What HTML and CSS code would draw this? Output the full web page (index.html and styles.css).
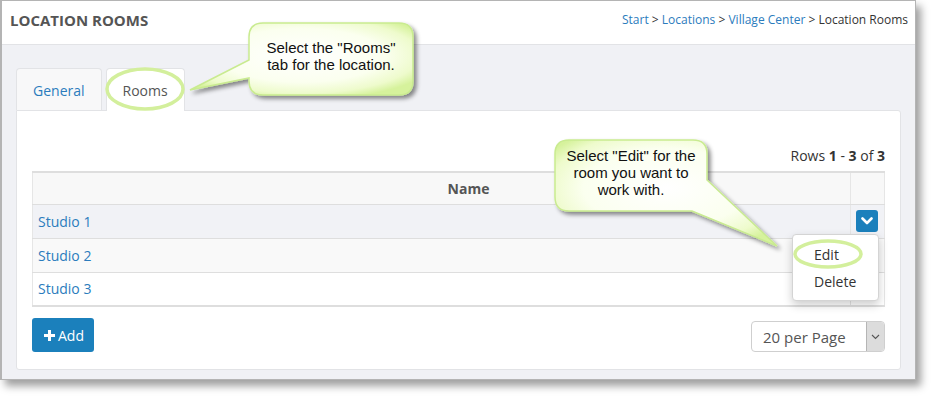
FILE: index.html
```html
<!DOCTYPE html>
<html>
<head>
<meta charset="utf-8">
<link rel="stylesheet" href="styles.css">
</head>
<body>
<div class="window">
  <div class="header">
    <h1 class="title">LOCATION ROOMS</h1>
    <div class="crumbs"><a>Start</a> &gt; <a>Locations</a> &gt; <a>Village Center</a> &gt; <span class="cur">Location Rooms</span></div>
  </div>
  <div class="content">
    <div class="tabs">
      <div class="tab">General</div>
      <div class="tab active">Rooms</div>
    </div>
    <div class="panel">
      <div class="rows-info">Rows <b>1</b> - <b>3</b> of <b>3</b></div>
      <table class="grid">
        <thead>
          <tr><th class="name">Name</th><th class="act"></th></tr>
        </thead>
        <tbody>
          <tr class="hover"><td><a>Studio 1</a></td><td class="act">
            <span class="toggle"><svg width="12" height="8" viewBox="0 0 12 8"><polyline points="1.5,1.5 6,6 10.5,1.5" fill="none" stroke="#fff" stroke-width="2.6" stroke-linecap="round" stroke-linejoin="round"/></svg></span>
            <div class="menu">
              <div class="item">Edit</div>
              <div class="item">Delete</div>
            </div>
          </td></tr>
          <tr class="odd"><td><a>Studio 2</a></td><td class="act"></td></tr>
          <tr><td><a>Studio 3</a></td><td class="act"></td></tr>
        </tbody>
      </table>
      <div class="footer">
        <button class="add"><svg width="11" height="11" viewBox="0 0 11 11"><path d="M4 0h3v4h4v3H7v4H4V7H0V4h4z" fill="#fff"/></svg>Add</button>
        <div class="select"><span class="sel-text">20 per Page</span><span class="sel-arrow"><svg width="9" height="6" viewBox="0 0 9 6"><polyline points="1,1 4.5,4.5 8,1" fill="none" stroke="#555" stroke-width="1.1"/></svg></span></div>
      </div>
    </div>
  </div>
</div>

<svg class="overlay" width="940" height="406" viewBox="0 0 940 406">
  <defs>
    <radialGradient id="g1" cx="50%" cy="45%" r="62%">
      <stop offset="0" stop-color="#ffffff"/>
      <stop offset="0.6" stop-color="#fbffef"/>
      <stop offset="0.85" stop-color="#eefbcc"/>
      <stop offset="1" stop-color="#d6f29c"/>
    </radialGradient>
    <filter id="sh" x="-20%" y="-20%" width="140%" height="150%">
      <feDropShadow dx="3" dy="3" stdDeviation="2" flood-color="#000" flood-opacity="0.45"/>
    </filter>
  </defs>
  <ellipse cx="145" cy="89" rx="38" ry="20" fill="none" stroke="#d3ef9c" stroke-width="3.5"/>
  <ellipse cx="828" cy="254" rx="33" ry="13" fill="none" stroke="#d3ef9c" stroke-width="3.5"/>
  <path filter="url(#sh)" fill="url(#g1)" stroke="#c9eb90" stroke-width="1.5"
    d="M263 23 H399 Q413 23 413 37 V81 Q413 95 399 95 H263 Q249 95 249 81 V78 L190 90 L249 60 V37 Q249 23 263 23 Z"/>
  <path filter="url(#sh)" fill="url(#g1)" stroke="#c9eb90" stroke-width="1.5"
    d="M569 140 H693 Q707 140 707 154 V180 L777 246 L692 211 H569 Q555 211 555 197 V154 Q555 140 569 140 Z"/>
</svg>
<div class="note note1">Select the "Rooms"<br>tab for the location.</div>
<div class="note note2">Select "Edit" for the<br>room you want to<br>work with.</div>
</body>
</html>
```

FILE: styles.css
```css
* { box-sizing: border-box; }
html, body { margin: 0; padding: 0; }
body {
  width: 940px;
  height: 406px;
  background: #ffffff;
  font-family: "Open Sans", "Liberation Sans", sans-serif;
  color: #333;
  position: relative;
  overflow: hidden;
}
a { color: #2b7cbd; text-decoration: none; }

.window {
  width: 916px;
  height: 380px;
  border: 1px solid #b4b4b4;
  border-left-width: 2px;
  background: #f0f1f5;
  box-shadow: 5px 6px 8px rgba(0, 0, 0, 0.38);
  display: flex;
  flex-direction: column;
}
.header {
  height: 44px;
  flex: none;
  background: #fff;
  border-bottom: 1px solid #e2e3e6;
  display: flex;
  align-items: center;
  justify-content: space-between;
  padding: 0 7px 6px 8px;
}
.title {
  margin: 0;
  font-size: 15px;
  font-weight: 700;
  color: #555;
  letter-spacing: 0;
}
.crumbs {
  font-size: 12px;
  color: #333;
}
.crumbs .cur { color: #333; }

.content {
  flex: 1;
  padding: 23px 14px 9px 14px;
}
.tabs {
  display: flex;
  gap: 4px;
  height: 42px;
}
.tab {
  height: 42px;
  padding: 0 16px;
  border: 1px solid #e2e3e6;
  border-bottom: 0;
  border-radius: 4px 4px 0 0;
  background: #f8f8f9;
  color: #2b7cbd;
  font-size: 14px;
  display: flex;
  align-items: center;
  padding-top: 1px;
}
.tab.active {
  background: #fff;
  color: #555;
  height: 43px;
  position: relative;
  z-index: 1;
}
.panel {
  background: #fff;
  border: 1px solid #e2e3e6;
  border-radius: 0 3px 3px 3px;
  padding: 35px 15px 17px 15px;
}
.rows-info {
  text-align: right;
  font-size: 14px;
  line-height: 20px;
  color: #333;
  margin-bottom: 5px;
}
.rows-info b { font-weight: 700; }

.grid {
  width: 100%;
  border-collapse: collapse;
  font-size: 14px;
  border-top: 2px solid #dedede;
  border-bottom: 2px solid #dedede;
  border-left: 1px solid #e6e6e6;
  border-right: 1px solid #e6e6e6;
}
.grid th {
  height: 32px;
  background: #f8f8f8;
  color: #555;
  font-weight: 700;
  border-bottom: 1px solid #dedede;
  padding: 0;
}
.grid th.name { text-align: center; padding-left: 54px; }
.grid td {
  height: 34px;
  padding: 0 0 0 5px;
  border-bottom: 1px solid #dedede;
}
.grid tbody tr:last-child td { border-bottom: 0; }
.grid .act {
  width: 34px;
  border-left: 1px solid #e6e6e6;
  padding: 0;
  position: relative;
}
.grid tr.hover td { background: #f1f2f6; }
.grid tr.odd td { background: #f9f9f9; }

.toggle {
  display: flex;
  width: 22px;
  height: 22px;
  margin-left: 5px;
  border-radius: 3px;
  background: #1b80bc;
  align-items: center;
  justify-content: center;
}
.menu {
  position: absolute;
  top: 29px;
  right: 5px;
  width: 87px;
  background: #fff;
  border: 1px solid #d4d4d4;
  border-radius: 4px;
  box-shadow: 0 4px 10px rgba(0, 0, 0, 0.2);
  padding: 6px 0 5px 0;
  z-index: 2;
}
.menu .item {
  height: 27px;
  line-height: 27px;
  padding-left: 21px;
  font-size: 14px;
  color: #333;
}

.footer {
  margin-top: 11px;
  display: flex;
  justify-content: space-between;
  align-items: flex-start;
}
.add {
  height: 34px;
  width: 62px;
  border: 0;
  border-radius: 3px;
  background: #1b80bc;
  color: #fff;
  font-family: "Open Sans", "Liberation Sans", sans-serif;
  font-size: 14px;
  display: flex;
  align-items: center;
  gap: 3px;
  padding: 0 0 0 12px;
}
.select {
  margin-top: 3px;
  width: 134px;
  height: 31px;
  border: 1px solid #cfcfcf;
  border-radius: 4px;
  display: flex;
  align-items: stretch;
  justify-content: space-between;
  font-size: 15px;
  color: #555;
}
.sel-text {
  padding-left: 11px;
  display: flex;
  align-items: center;
}
.sel-arrow {
  width: 18px;
  background: #dcdcdc;
  border-left: 1px solid #b5b5b5;
  border-radius: 0 3px 3px 0;
  display: flex;
  align-items: center;
  justify-content: center;
}

.overlay {
  position: absolute;
  left: 0;
  top: 0;
  pointer-events: none;
  z-index: 5;
}
.note {
  position: absolute;
  z-index: 6;
  font-family: "Liberation Sans", Arial, sans-serif;
  font-size: 15px;
  line-height: 17px;
  color: #111;
  text-align: center;
}
.note1 { left: 249px; top: 39px; width: 164px; }
.note2 { left: 555px; top: 147px; width: 152px; }
```
